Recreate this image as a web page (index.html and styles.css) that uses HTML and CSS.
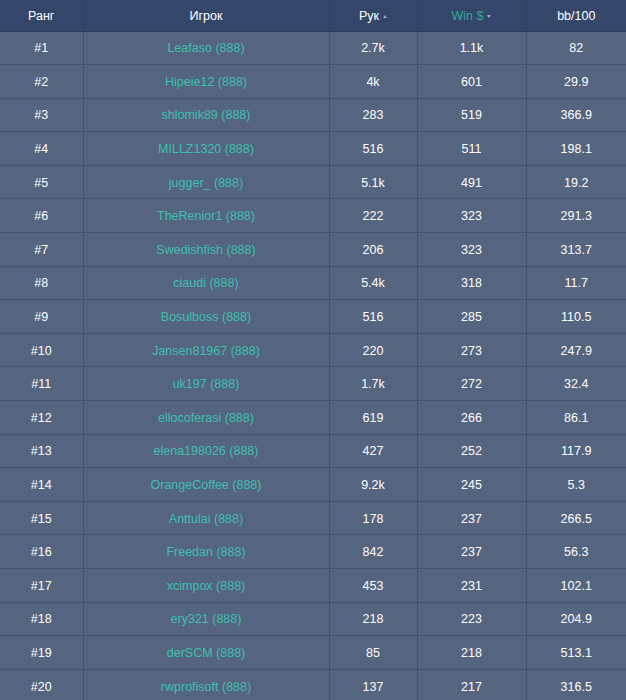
FILE: index.html
```html
<!DOCTYPE html>
<html lang="ru">
<head>
<meta charset="utf-8">
<link rel="stylesheet" href="styles.css">
</head>
<body>
<table class="board">
  <colgroup>
    <col class="c-rank"><col class="c-player"><col class="c-hands"><col class="c-win"><col class="c-bb">
  </colgroup>
  <thead>
    <tr>
      <th>Ранг</th>
      <th>Игрок</th>
      <th>Рук<span class="caret up"></span></th>
      <th class="active">Win $<span class="caret down"></span></th>
      <th>bb/100</th>
    </tr>
  </thead>
  <tbody>
    <tr><td>#1</td><td><a href="#">Leafaso (888)</a></td><td>2.7k</td><td>1.1k</td><td>82</td></tr>
    <tr><td>#2</td><td><a href="#">Hipeie12 (888)</a></td><td>4k</td><td>601</td><td>29.9</td></tr>
    <tr><td>#3</td><td><a href="#">shlomik89 (888)</a></td><td>283</td><td>519</td><td>366.9</td></tr>
    <tr><td>#4</td><td><a href="#">MILLZ1320 (888)</a></td><td>516</td><td>511</td><td>198.1</td></tr>
    <tr><td>#5</td><td><a href="#">jugger_ (888)</a></td><td>5.1k</td><td>491</td><td>19.2</td></tr>
    <tr><td>#6</td><td><a href="#">TheRenior1 (888)</a></td><td>222</td><td>323</td><td>291.3</td></tr>
    <tr><td>#7</td><td><a href="#">Swedishfish (888)</a></td><td>206</td><td>323</td><td>313.7</td></tr>
    <tr><td>#8</td><td><a href="#">ciaudi (888)</a></td><td>5.4k</td><td>318</td><td>11.7</td></tr>
    <tr><td>#9</td><td><a href="#">Bosulboss (888)</a></td><td>516</td><td>285</td><td>110.5</td></tr>
    <tr><td>#10</td><td><a href="#">Jansen81967 (888)</a></td><td>220</td><td>273</td><td>247.9</td></tr>
    <tr><td>#11</td><td><a href="#">uk197 (888)</a></td><td>1.7k</td><td>272</td><td>32.4</td></tr>
    <tr><td>#12</td><td><a href="#">ellocoferasi (888)</a></td><td>619</td><td>266</td><td>86.1</td></tr>
    <tr><td>#13</td><td><a href="#">elena198026 (888)</a></td><td>427</td><td>252</td><td>117.9</td></tr>
    <tr><td>#14</td><td><a href="#">OrangeCoffee (888)</a></td><td>9.2k</td><td>245</td><td>5.3</td></tr>
    <tr><td>#15</td><td><a href="#">Anttulai (888)</a></td><td>178</td><td>237</td><td>266.5</td></tr>
    <tr><td>#16</td><td><a href="#">Freedan (888)</a></td><td>842</td><td>237</td><td>56.3</td></tr>
    <tr><td>#17</td><td><a href="#">xcimpox (888)</a></td><td>453</td><td>231</td><td>102.1</td></tr>
    <tr><td>#18</td><td><a href="#">ery321 (888)</a></td><td>218</td><td>223</td><td>204.9</td></tr>
    <tr><td>#19</td><td><a href="#">derSCM (888)</a></td><td>85</td><td>218</td><td>513.1</td></tr>
    <tr><td>#20</td><td><a href="#">rwprofisoft (888)</a></td><td>137</td><td>217</td><td>316.5</td></tr>
  </tbody>
</table>
</body>
</html>
```
FILE: styles.css
```css
html, body {
  margin: 0;
  padding: 0;
  background: #55647f;
}
body {
  font-family: "Liberation Sans", Arial, sans-serif;
  font-size: 12.5px;
  color: #ffffff;
}
.board {
  width: 626px;
  border-collapse: collapse;
  table-layout: fixed;
}
.c-rank { width: 83px; }
.c-player { width: 246px; }
.c-hands { width: 88px; }
.c-win { width: 109px; }
.c-bb { width: 100px; }

.board th {
  background: #34476a;
  color: #ffffff;
  font-weight: normal;
  height: 31px;
  padding: 1px 0 0;
  text-align: center;
  border-left: 1px solid #2f3f5d;
  border-bottom: 1px solid #2c3b57;
  box-sizing: border-box;
}
.board th:first-child { border-left: none; }
.board th.active { color: #31a99a; }

.caret {
  display: inline-block;
  width: 0;
  height: 0;
  margin-left: 4px;
  vertical-align: middle;
  border-left: 2.5px solid transparent;
  border-right: 2.5px solid transparent;
}
.caret.up { border-bottom: 3px solid #9aa5b8; }
.caret.down { border-top: 3px solid #9aa5b8; }

.board td {
  background: #55647f;
  text-align: center;
  padding: 1px 0 0;
  height: 33.6px;
  box-sizing: border-box;
  border-left: 1px solid #45536d;
  border-bottom: 1px solid #45536d;
}
.board td:first-child { border-left: none; }
.board a {
  color: #3ec0b0;
  text-decoration: none;
}
```
